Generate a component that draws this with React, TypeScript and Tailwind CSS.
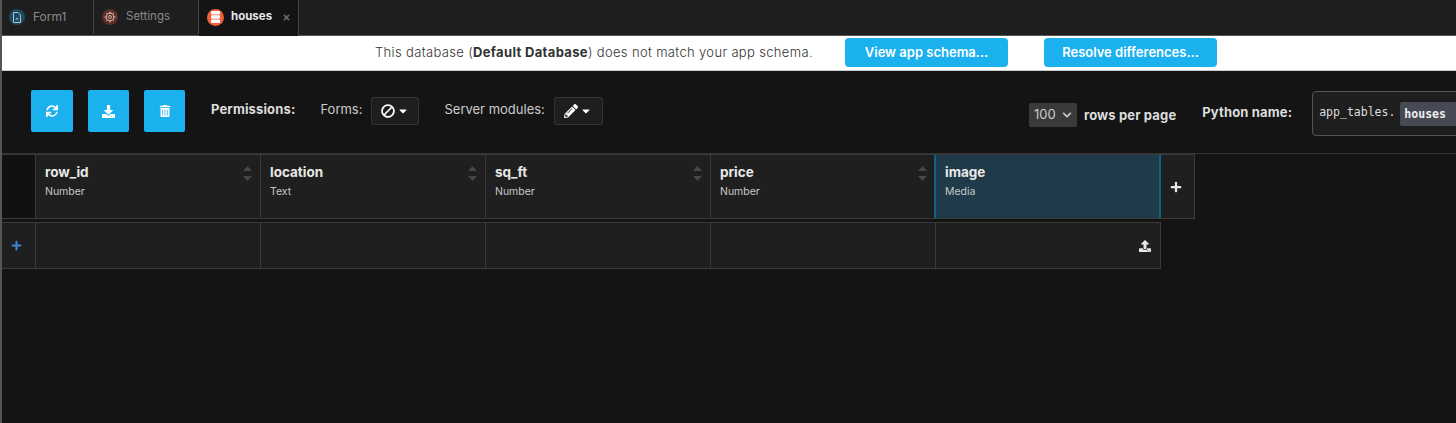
import { FaBan, FaCaretDown, FaChevronDown, FaDownload, FaPencilAlt, FaPlus, FaSync, FaTimes, FaTrashAlt, FaUpload } from "react-icons/fa"

const font = { fontFamily: "Inter, 'Noto Sans', sans-serif" }
const mono = { fontFamily: "'DejaVu Sans Mono', monospace" }

const columns = [
    { name: "row_id", type: "Number" },
    { name: "location", type: "Text" },
    { name: "sq_ft", type: "Number" },
    { name: "price", type: "Number" },
]

const FormIcon = () => (
    <svg width="10" height="11" viewBox="0 0 10 11" fill="none" stroke="#a9c3cf" strokeWidth="1">
        <path d="M1.5 .5h4.5l2.5 2.5v7.500h-7z" />
        <path d="M3.500 7.500l1.500-2 1.500 2z" fill="#a9c3cf" stroke="none" />
    </svg>
)

const GearIcon = () => (
    <svg width="12" height="12" viewBox="0 0 12 12" fill="none" stroke="#d0aea6">
        <circle cx="6" cy="6" r="3.800" strokeWidth="1.200" />
        <circle cx="6" cy="6" r="1.500" strokeWidth="1" />
        <path d="M6 .5v1.500M6 10v1.500M.5 6H2M10 6h1.500M2.200 2.200l1 1M8.800 8.800l1 1M9.800 2.200l-1 1M3.200 8.800l-1 1" strokeWidth="1" />
    </svg>
)

const DbIcon = () => (
    <svg width="11" height="12" viewBox="0 0 11 12" fill="#fff">
        <rect x="1" y="0" width="9" height="3.500" rx="1" />
        <rect x="1" y="4.250" width="9" height="3.500" rx="1" />
        <rect x="1" y="8.500" width="9" height="3.500" rx="1" />
    </svg>
)

const SortArrows = () => (
    <svg className="absolute right-[8px] top-[11px]" width="9" height="15" viewBox="0 0 9 15" fill="#44464d">
        <path d="M4.500 0L9 5H0z" />
        <path d="M0 10h9l-4.500 5z" />
    </svg>
)

const Tabs = () => {
    return (
        <div className="flex h-[36px] bg-[#1e1e1e] border-b border-[#555]">
            <div className="w-[92px] flex items-center pl-[7px] gap-[8px] border-r border-[#444] h-[34px]">
                <span className="size-4 rounded-full bg-[#1d4a63] flex items-center justify-center"><FormIcon /></span>
                <span className="text-[12px] text-[#8a8a8a]">Form1</span>
            </div>
            <div className="w-[105px] flex items-center pl-[8px] gap-[8px] border-r border-[#444] h-[34px]">
                <span className="size-4 rounded-full bg-[#5c3029] flex items-center justify-center"><GearIcon /></span>
                <span className="text-[11.5px] text-[#8a8a8a]">Settings</span>
            </div>
            <div className="w-[100px] flex items-center pl-[8px] pb-[2px] h-[36px] bg-[#141414] border-r border-[#444]">
                <span className="size-[17px] rounded-full bg-[#f4603a] flex items-center justify-center"><DbIcon /></span>
                <span className="ml-[7px] text-[11.5px] font-bold text-[#e8e8e8]">houses</span>
                <FaTimes className="ml-[10px] text-[#666] text-[9px]" />
            </div>
        </div>
    )
}

const Banner = () => {
    return (
        <div className="h-[35px] bg-white border-b border-[#ccc] flex items-center pb-[2px] text-[#333]">
            <p className="ml-[373px] mt-[2px] w-[439px] text-[13px] tracking-[0.34px] font-light whitespace-nowrap">
                This database (<b className="font-bold">Default Database</b>) does not match your app schema.
            </p>
            <button className="ml-[31px] w-[163px] h-[29px] pt-[1px] rounded-[4px] bg-[#1bb0ee] text-white text-[13px] font-semibold">View app schema...</button>
            <button className="ml-[36px] w-[173px] h-[29px] pt-[1px] rounded-[4px] bg-[#1bb0ee] text-white text-[13px] font-semibold">Resolve differences...</button>
        </div>
    )
}

const Toolbar = () => {
    return (
        <div className="h-[83px] flex border-b border-[#333] overflow-hidden">
            <div className="flex items-start pt-[19px] pl-[29px]">
                <button className="size-[42px] rounded-[2px] bg-[#1bb0ee] flex items-center justify-center text-white text-[12px]"><FaSync /></button>
                <button className="ml-[15px] w-[41px] h-[42px] rounded-[2px] bg-[#1bb0ee] flex items-center justify-center text-white text-[13px]"><FaDownload /></button>
                <button className="ml-[15px] w-[41px] h-[42px] rounded-[2px] bg-[#1bb0ee] flex items-center justify-center text-white text-[12px]"><FaTrashAlt /></button>
                <span className="ml-[26px] mt-[10px] text-[13px] tracking-[0.15px] font-bold text-[#ddd]">Permissions:</span>
                <span className="ml-[25px] mt-[10px] text-[13px] text-[#ccc]">Forms:</span>
                <div className="ml-[9px] mt-[7px] w-[48px] h-[28px] rounded-[2px] bg-[#1e1e1e] border border-[#333] flex items-center justify-center gap-[2px] text-white">
                    <FaBan className="text-[14px] -scale-x-100" />
                    <FaCaretDown className="text-[12px]" />
                </div>
                <span className="ml-[25px] mt-[10px] text-[13px] text-[#ccc]">Server modules:</span>
                <div className="ml-[9px] mt-[7px] w-[49px] h-[28px] rounded-[2px] bg-[#1e1e1e] border border-[#333] flex items-center justify-center gap-[2px] text-white">
                    <FaPencilAlt className="text-[14px]" />
                    <FaCaretDown className="text-[12px]" />
                </div>
            </div>
            <div className="ml-auto flex items-start shrink-0 w-[427px]">
                <div className="mt-[32px] w-[48px] h-[24px] shrink-0 rounded-[2px] bg-[#3a3a3a] flex items-center pl-[5px] gap-[6px] text-[13px] text-[#ccc]">
                    100 <FaChevronDown className="text-[10px]" />
                </div>
                <span className="ml-[7px] mt-[35px] text-[13px] tracking-[0.15px] font-bold text-[#ddd] whitespace-nowrap">rows per page</span>
                <span className="ml-[26px] mt-[32px] text-[13px] tracking-[0.15px] font-bold text-[#ddd] whitespace-nowrap">Python name:</span>
                <div className="ml-[20px] mt-[20px] w-[160px] h-[45px] shrink-0 rounded-[4px] border border-[#555] bg-[#1e1e1e] flex items-center pl-[6px]">
                    <span className="text-[11.5px] text-[#ddd] -mt-[2px]" style={mono}>app_tables.</span>
                    <span className="ml-[5px] flex-1 h-[24px] mt-[1px] pl-[4px] bg-[#454a55] rounded-[2px] text-[11.5px] leading-[24px] text-[#eee] font-bold" style={mono}>houses</span>
                </div>
            </div>
        </div>
    )
}

const Grid = () => {
    return (
        <div>
            <div className="flex w-fit h-[65px] border-y border-r border-[#3a3a3a]">
                <div className="w-[34px] bg-[#111] border-r border-[#3a3a3a]" />
                {columns.map((col) => (
                    <div key={col.name} className="w-[225px] bg-[#1f1f1f] border-r border-[#3a3a3a] pl-[9px] pt-[8px] relative">
                        <div className="text-[13.5px] leading-[18px] font-bold text-[#e8e8e8]">{col.name}</div>
                        <div className="mt-[3px] text-[10.5px] leading-[16px] text-[#c8c8c8]">{col.type}</div>
                        <SortArrows />
                    </div>
                ))}
                <div className="relative w-[227px] -ml-[2px] bg-[#1f3a48] border-x-2 border-[#0f6287] pl-[9px] pt-[8px]">
                    <div className="text-[13.5px] leading-[18px] font-bold text-[#e8e8e8]">image</div>
                    <div className="mt-[3px] text-[10.5px] leading-[16px] text-[#c8c8c8]">Media</div>
                </div>
                <div className="w-[33px] bg-[#1f1f1f] flex items-center justify-center pr-[4px] text-[#e8e8e8] text-[12px]"><FaPlus /></div>
            </div>
            <div className="flex w-fit h-[47px] mt-[3px] border-y border-r border-[#3a3a3a] bg-[#1f1f1f]">
                <div className="w-[34px] border-r border-[#3a3a3a] flex items-center pl-[9px] text-[#3f86d8] text-[11px]"><FaPlus /></div>
                {columns.map((col) => (
                    <div key={col.name} className="w-[225px] border-r border-[#3a3a3a]" />
                ))}
                <div className="w-[224px] flex items-center justify-end pr-[9px] text-[#e6e6e6] text-[12px]"><FaUpload /></div>
            </div>
        </div>
    )
}

const App = () => {
    return (
        <div className="h-[423px] overflow-hidden bg-[#141414] border-l-2 border-[#555]" style={font}>
            <Tabs />
            <Banner />
            <Toolbar />
            <Grid />
        </div>
    )
}

export default App
